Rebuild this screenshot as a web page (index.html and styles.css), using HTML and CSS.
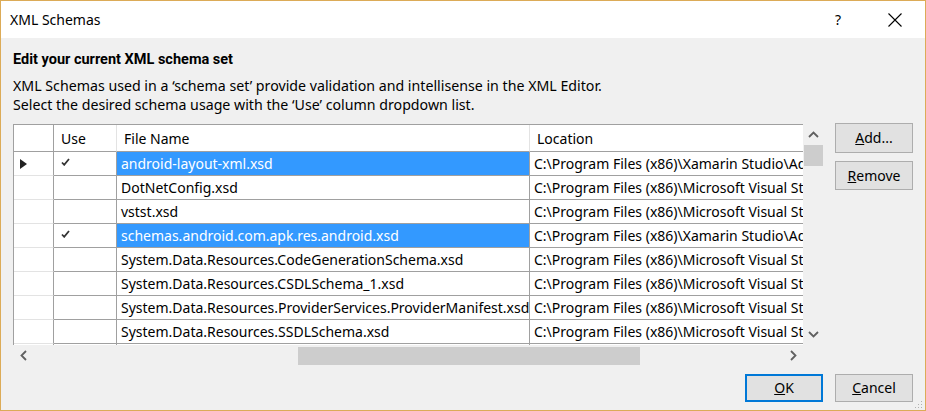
FILE: index.html
```html
<!DOCTYPE html>
<html>
<head>
<meta charset="utf-8">
<link rel="stylesheet" href="styles.css">
</head>
<body>
<div class="window">
  <div class="titlebar">
    <span class="title">XML Schemas</span>
    <span class="help">?</span>
    <svg class="close" width="14" height="14" viewBox="0 0 14 14"><path d="M0.5 0.5 L13.5 13.5 M13.5 0.5 L0.5 13.5" stroke="#000" stroke-width="1.1" fill="none"/></svg>
  </div>
  <div class="content">
    <div class="heading">Edit your current XML schema set</div>
    <div class="desc">
      <div>XML Schemas used in a ‘schema set’ provide validation and intellisense in the XML Editor.</div>
      <div>Select the desired schema usage with the ‘Use’ column dropdown list.</div>
    </div>
    <div class="main">
      <div class="gridbox">
        <div class="viewport">
          <div class="row head">
            <div class="c rh"></div>
            <div class="c use">Use</div>
            <div class="c file">File Name</div>
            <div class="c loc">Location</div>
          </div>
          <div class="row">
            <div class="c rh"><svg width="7" height="10" viewBox="0 0 7 10"><path d="M0 0 L7 5 L0 10 Z" fill="#222"/></svg></div>
            <div class="c use"><svg class="chk" width="9" height="8" viewBox="0 0 9 8"><path d="M1 4.5 L3.2 6.8 L8 1" stroke="#333" stroke-width="1.8" fill="none"/></svg></div>
            <div class="c file sel">android-layout-xml.xsd</div>
            <div class="c loc">C:\Program Files (x86)\Xamarin Studio\AddIns</div>
          </div>
          <div class="row">
            <div class="c rh"></div>
            <div class="c use"></div>
            <div class="c file">DotNetConfig.xsd</div>
            <div class="c loc">C:\Program Files (x86)\Microsoft Visual Studio</div>
          </div>
          <div class="row">
            <div class="c rh"></div>
            <div class="c use"></div>
            <div class="c file">vstst.xsd</div>
            <div class="c loc">C:\Program Files (x86)\Microsoft Visual Studio</div>
          </div>
          <div class="row">
            <div class="c rh"></div>
            <div class="c use"><svg class="chk" width="9" height="8" viewBox="0 0 9 8"><path d="M1 4.5 L3.2 6.8 L8 1" stroke="#333" stroke-width="1.8" fill="none"/></svg></div>
            <div class="c file sel">schemas.android.com.apk.res.android.xsd</div>
            <div class="c loc">C:\Program Files (x86)\Xamarin Studio\AddIns</div>
          </div>
          <div class="row">
            <div class="c rh"></div>
            <div class="c use"></div>
            <div class="c file">System.Data.Resources.CodeGenerationSchema.xsd</div>
            <div class="c loc">C:\Program Files (x86)\Microsoft Visual Studio</div>
          </div>
          <div class="row">
            <div class="c rh"></div>
            <div class="c use"></div>
            <div class="c file">System.Data.Resources.CSDLSchema_1.xsd</div>
            <div class="c loc">C:\Program Files (x86)\Microsoft Visual Studio</div>
          </div>
          <div class="row">
            <div class="c rh"></div>
            <div class="c use"></div>
            <div class="c file">System.Data.Resources.ProviderServices.ProviderManifest.xsd</div>
            <div class="c loc">C:\Program Files (x86)\Microsoft Visual Studio</div>
          </div>
          <div class="row">
            <div class="c rh"></div>
            <div class="c use"></div>
            <div class="c file">System.Data.Resources.SSDLSchema.xsd</div>
            <div class="c loc">C:\Program Files (x86)\Microsoft Visual Studio</div>
          </div>
          <div class="row">
            <div class="c rh"></div>
            <div class="c use"></div>
            <div class="c file"></div>
            <div class="c loc"></div>
          </div>
        </div>
        <div class="vscroll">
          <div class="arrow-v"><svg width="11" height="7" viewBox="0 0 11 7"><path d="M1 6 L5.5 1.5 L10 6" stroke="#606060" stroke-width="1.8" fill="none"/></svg></div>
          <div class="vthumb"></div>
          <div class="vtrack"></div>
          <div class="arrow-v"><svg width="11" height="7" viewBox="0 0 11 7"><path d="M1 1 L5.5 5.5 L10 1" stroke="#606060" stroke-width="1.8" fill="none"/></svg></div>
        </div>
        <div class="hscroll">
          <div class="arrow-h"><svg width="7" height="11" viewBox="0 0 7 11"><path d="M6 1 L1.5 5.5 L6 10" stroke="#606060" stroke-width="1.8" fill="none"/></svg></div>
          <div class="htrack"><div class="hthumb"></div></div>
          <div class="arrow-h"><svg width="7" height="11" viewBox="0 0 7 11"><path d="M1 1 L5.5 5.5 L1 10" stroke="#606060" stroke-width="1.8" fill="none"/></svg></div>
        </div>
        <div class="corner"></div>
      </div>
      <div class="side">
        <button class="btn add"><u>A</u>dd...</button>
        <button class="btn remove"><u>R</u>emove</button>
      </div>
    </div>
    <div class="footer">
      <button class="btn ok"><u>O</u>K</button>
      <button class="btn cancel"><u>C</u>ancel</button>
    </div>
    <svg class="grip" width="8" height="8" viewBox="0 0 8 8"><rect x="6" y="0" width="1" height="1" fill="#b0b0b0"/><rect x="3" y="3" width="1" height="1" fill="#b0b0b0"/><rect x="6" y="3" width="1" height="1" fill="#b0b0b0"/><rect x="0" y="6" width="1" height="1" fill="#b0b0b0"/><rect x="3" y="6" width="1" height="1" fill="#b0b0b0"/><rect x="6" y="6" width="1" height="1" fill="#b0b0b0"/></svg>
  </div>
</div>
</body>
</html>
```

FILE: styles.css
```css
* { box-sizing: border-box; }
html, body { margin: 0; padding: 0; }
body {
  width: 926px;
  height: 411px;
  overflow: hidden;
  font-family: "Noto Sans", "Open Sans", sans-serif;
  font-size: 14.2px;
  color: #000;
}
.window {
  width: 926px;
  height: 411px;
  border: 1px solid #dcab57;
  display: flex;
  flex-direction: column;
  background: #f0f0f0;
}
.titlebar {
  height: 37px;
  background: #fff;
  display: flex;
  align-items: center;
  padding-left: 9px;
  flex: none;
}
.title {
  font-size: 14px;
  flex: 1;
}
.help {
  font-size: 14px;
  margin-right: 47px;
}
.close {
  margin-right: 23px;
  display: block;
}
.content {
  flex: 1;
  position: relative;
  padding: 0 12px;
}
.heading {
  margin-top: 12px;
  line-height: 20px;
  font-family: Roboto, "Noto Sans", sans-serif;
  font-weight: bold;
  font-size: 14.5px;
}
.desc {
  margin-top: 6px;
  line-height: 19px;
  font-size: 14.2px;
}
.main {
  margin-top: 10px;
  display: flex;
  gap: 12px;
  align-items: flex-start;
}
.gridbox {
  display: grid;
  grid-template-columns: 790px 20px;
  grid-template-rows: 221px 21px;
  font-size: 14px;
}
.viewport {
  border-top: 1px solid #a0a0a0;
  border-left: 1px solid #a0a0a0;
  background: #fff;
  overflow: hidden;
}
.row {
  display: grid;
  grid-template-columns: 40px 63px 413px 273px;
  height: 24px;
}
.row.head { height: 27px; }
.c {
  border-right: 1px solid #a0a0a0;
  border-bottom: 1px solid #a0a0a0;
  white-space: nowrap;
  overflow: hidden;
  display: flex;
  align-items: center;
  padding-left: 4px;
}
.c.rh {
  border-bottom-color: #e3e3e3;
  padding-left: 6px;
}
.c.loc { border-right: none; }
.head .c { padding-left: 7px; }
.head .c.use, .head .c.file { border-right-color: #e3e3e3; }
.head .c.rh { border-bottom-color: #a0a0a0; }
.c.use { padding-left: 7px; }
.chk { margin-top: -4px; }
.sel {
  background: #3399ff;
  color: #fff;
}
.vscroll {
  grid-row: 1;
  grid-column: 2;
  display: flex;
  flex-direction: column;
}
.arrow-v {
  height: 21px;
  display: flex;
  align-items: center;
  justify-content: center;
  flex: none;
}
.vthumb {
  height: 21px;
  margin-left: 1px;
  background: #cdcdcd;
  flex: none;
}
.vtrack { flex: 1; }
.hscroll {
  grid-row: 2;
  grid-column: 1;
  display: flex;
  align-items: center;
}
.arrow-h {
  width: 20px;
  height: 21px;
  display: flex;
  align-items: center;
  justify-content: center;
  flex: none;
}
.htrack {
  flex: 1;
  height: 21px;
  display: flex;
  align-items: center;
}
.hthumb {
  margin-left: 265px;
  width: 342px;
  height: 18px;
  background: #cdcdcd;
}
.side {
  display: flex;
  flex-direction: column;
  gap: 8px;
  margin-top: -1px;
}
.btn {
  font-family: inherit;
  font-size: 14px;
  line-height: 18px;
  color: #000;
  background: #e1e1e1;
  border: 1px solid #adadad;
  width: 78px;
  padding: 0;
  margin: 0;
  display: flex;
  align-items: center;
  justify-content: center;
}
.btn.add { height: 30px; }
.btn.remove { height: 29px; }
.footer {
  margin-top: 8px;
  display: flex;
  justify-content: flex-end;
  gap: 12px;
}
.btn.ok, .btn.cancel { height: 28px; }
.btn.ok { border: 2px solid #0078d7; }
.grip {
  position: absolute;
  right: 2px;
  bottom: 1px;
}
```
